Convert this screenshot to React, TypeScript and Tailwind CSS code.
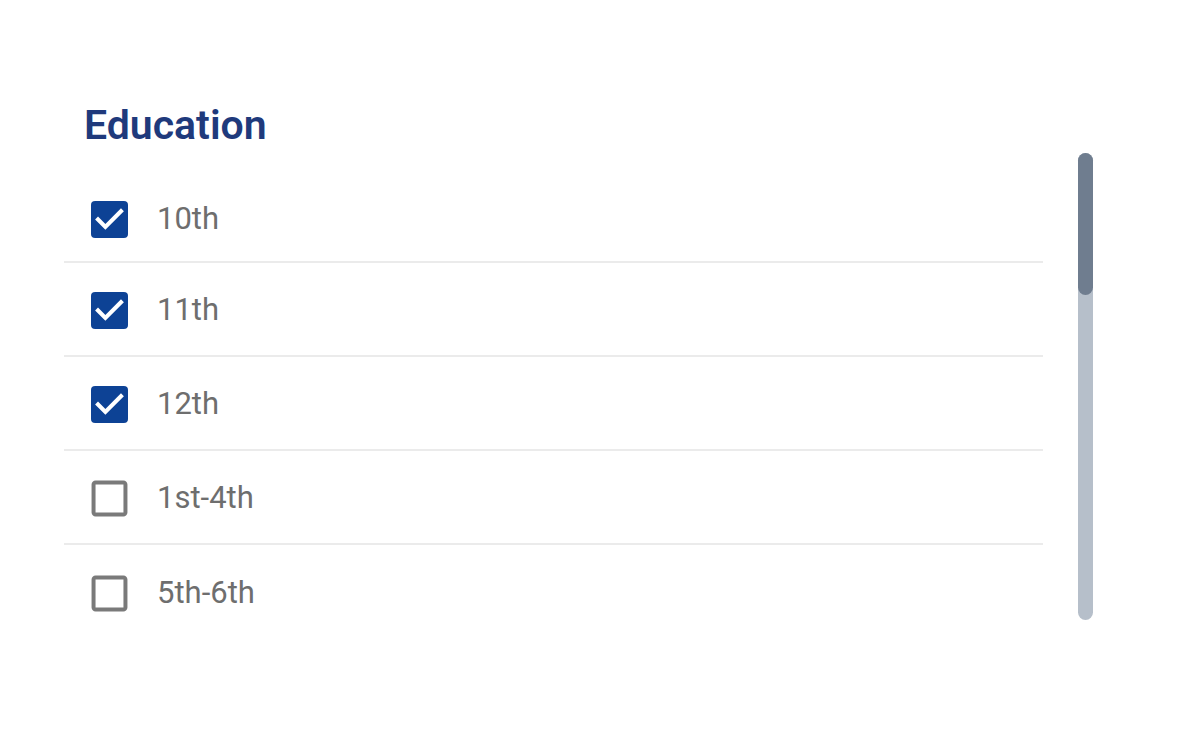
import { useState } from 'react';

const items = [
  { id: '10th', label: '10th', checked: true },
  { id: '11th', label: '11th', checked: true },
  { id: '12th', label: '12th', checked: true },
  { id: '1st-4th', label: '1st-4th', checked: false },
  { id: '5th-6th', label: '5th-6th', checked: false },
];

// MUI-style checkbox glyphs, cropped to the box itself
function Box({ checked }: { checked: boolean }) {
  return (
    <svg viewBox="3 3 18 18" className="w-[37px] h-[37px] shrink-0">
      {checked ? (
        <>
          <rect x="3" y="3" width="18" height="18" rx="2" fill="#0d4295" />
          <path d="M10 17l-5-5 1.41-1.41L10 14.17l7.59-7.59L19 8l-9 9z" fill="#ffffff" />
        </>
      ) : (
        <path
          d="M19 5v14H5V5h14m0-2H5c-1.1 0-2 .9-2 2v14c0 1.1.9 2 2 2h14c1.1 0 2-.9 2-2V5c0-1.1-.9-2-2-2z"
          fill="#7a7a7a"
          transform="translate(12 12) scale(0.97) translate(-12 -12)"
        />
      )}
    </svg>
  );
}

export default function App() {
  const [state, setState] = useState(items);

  return (
    <div className="w-[1200px] h-[748px] bg-white pt-[99px] pl-[64px]" style={{ fontFamily: 'Roboto, "Liberation Sans", sans-serif' }}>
      <h2 className="ml-[20px] text-[41px] leading-[52px] font-semibold text-[#1f3a7c]">Education</h2>

      <div className="flex gap-[35px] mt-[2px]">
        <div className="w-[979px] h-[467px] overflow-hidden">
          <div className="pt-[16px]">
            {state.map((item, i) => (
              <label
                key={item.id}
                className={`flex items-center h-[94px] pl-[27px] gap-[29px] cursor-pointer ${
                  i === 0 ? 'pt-[8px]' : 'pt-[2px]'
                } ${i < state.length - 1 ? 'border-b-2 border-[#ebebeb]' : ''}`}
                onClick={() =>
                  setState((prev) => prev.map((p) => (p.id === item.id ? { ...p, checked: !p.checked } : p)))
                }
              >
                <Box checked={item.checked} />
                <span className="text-[31px] text-[#6e6e6e]">{item.label}</span>
              </label>
            ))}
          </div>
        </div>

        <div className="w-[15px] h-[467px] rounded-full bg-[#b6bfca] flex flex-col">
          <div className="h-[142px] rounded-full bg-[#6f7d8f]" />
        </div>
      </div>
    </div>
  );
}
